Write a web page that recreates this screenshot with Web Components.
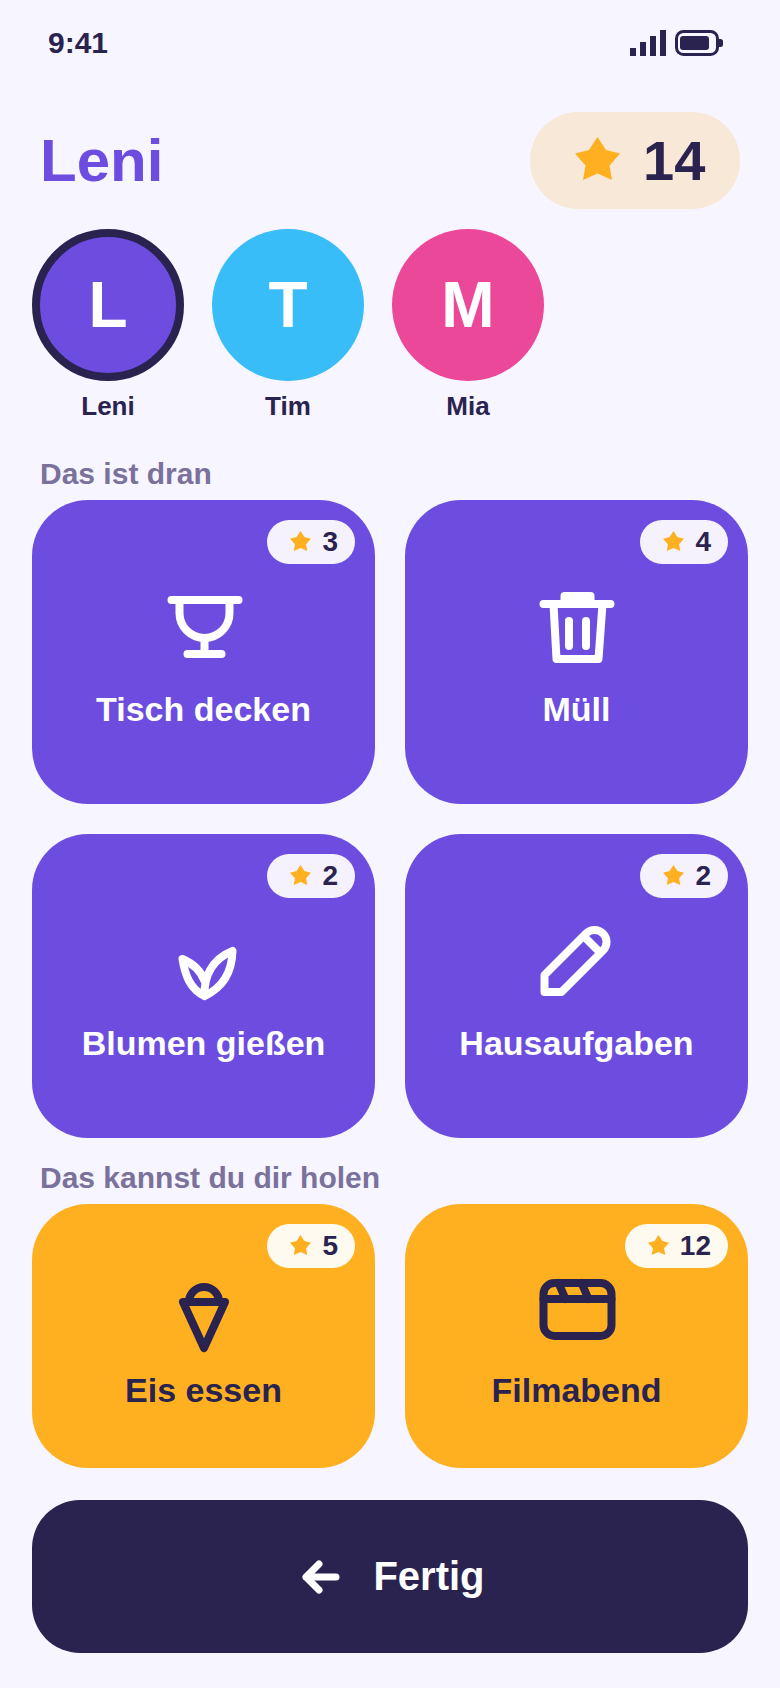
<!DOCTYPE html>
<html lang="de">
<head>
<meta charset="utf-8">
<title>Leni</title>
<style>
  html, body { margin: 0; padding: 0; }
  body {
    width: 780px;
    height: 1688px;
    overflow: hidden;
    background: #f7f5ff;
    color: #2a2350;
    font-family: "Liberation Sans", Arial, sans-serif;
  }
</style>
</head>
<body>
<app-screen>
  <status-bar slot="status" time="9:41"></status-bar>
  <span slot="name">Leni</span>
  <score-badge slot="score">14</score-badge>
  <kid-avatar slot="kids" selected color="#6c4de0" letter="L">Leni</kid-avatar>
  <kid-avatar slot="kids" color="#38bdf8" letter="T">Tim</kid-avatar>
  <kid-avatar slot="kids" color="#ec4899" letter="M">Mia</kid-avatar>

  <section-title>Das ist dran</section-title>
  <card-grid>
    <task-card icon="cup" stars="3">Tisch decken</task-card>
    <task-card icon="trash" stars="4">Müll</task-card>
    <task-card icon="leaf" stars="2">Blumen gießen</task-card>
    <task-card icon="pencil" stars="2">Hausaufgaben</task-card>
  </card-grid>

  <section-title second>Das kannst du dir holen</section-title>
  <card-grid>
    <task-card reward icon="icecream" stars="5">Eis essen</task-card>
    <task-card reward icon="film" stars="12">Filmabend</task-card>
  </card-grid>

  <done-button>Fertig</done-button>
</app-screen>

<script>
"use strict";

const STAR_POINTS = "22.5,0 31,13 45,16.5 34.5,28.5 37,43 22.5,36.5 8,43 10.5,28.5 0,16.5 14,13";

// All drawn in an 84px box, stroke comes from the svg rule in task-card.
const ICONS = {
  cup: `<path d="M9.5 15H76.5M17.5 15V28a25 25 0 0 0 50 0V15M42.5 53V69M25.5 69H59.5"/>`,
  trash: `<path d="M8.5 19H75.5M18.5 19L21.5 74H63.5L67.5 19M34 36V61M51 36V61"/><rect class="fill" x="25.5" y="7" width="34" height="14" rx="4"/>`,
  leaf: `<path d="M42.5 77C42 60 48 41 70.5 32C70 52 62 68 42.5 77ZM42.5 77C28 70 23 56 20.5 40C32 45 39 52 42.5 62"/>`,
  pencil: `<path d="M9.5 73V56L51 14.5A12 12 0 0 1 68 31.5L26.5 73ZM48.5 17L65.5 34"/>`,
  icecream: `<path d="M21 35H63L42 81ZM27 35A15 15 0 0 1 57 35"/>`,
  film: `<rect x="8.5" y="16" width="68" height="53" rx="11"/><path d="M8.5 32H76.5M23.5 16L30.5 32M46.5 16L53.5 32"/>`,
};

class AppScreen extends HTMLElement {
  constructor() {
    super();
    this.attachShadow({ mode: 'open' });
    this.shadowRoot.innerHTML = `
<style>
:host { display: block; padding: 0 32px; }
header {
  display: flex;
  align-items: center;
  justify-content: space-between;
  padding: 0 8px;
  margin-top: 56px;
}
h1 {
  margin: 0;
  font-size: 60px;
  font-weight: 700;
  color: #6c4de0;
}
.kids { display: flex; gap: 28px; margin-top: 20px; }
</style>
<slot name="status"></slot>
<header>
  <h1><slot name="name"></slot></h1>
  <slot name="score"></slot>
</header>
<div class="kids"><slot name="kids"></slot></div>
<slot></slot>
`;
  }
}

class StatusBar extends HTMLElement {
  constructor() {
    super();
    this.attachShadow({ mode: 'open' });
  }

  connectedCallback() {
    this.shadowRoot.innerHTML = `
<style>
:host {
  display: flex;
  align-items: center;
  justify-content: space-between;
  height: 26px;
  padding: 30px 25px 0 16px;
  font-size: 30px;
  font-weight: 700;
}
.icons { display: flex; gap: 9px; }
svg { display: block; fill: #2a2350; }
</style>
<span>${this.getAttribute("time")}</span>
<div class="icons">
  <svg width="36" height="26" viewBox="0 0 36 26">
    <rect x="0" y="18" width="6" height="8"/>
    <rect x="10" y="12" width="6" height="14"/>
    <rect x="20" y="6" width="6" height="20"/>
    <rect x="30" y="0" width="6" height="26"/>
  </svg>
  <svg width="48" height="26" viewBox="0 0 48 26">
    <rect x="1.5" y="1.5" width="41" height="23" rx="7" fill="none" stroke="#2a2350" stroke-width="3"/>
    <rect x="5" y="6" width="29" height="14" rx="3"/>
    <path d="M44 9h1.5a2.5 2.5 0 0 1 2.5 2.5v3a2.5 2.5 0 0 1-2.5 2.5H44z"/>
  </svg>
</div>
`;
  }
}

class ScoreBadge extends HTMLElement {
  constructor() {
    super();
    this.attachShadow({ mode: 'open' });
    this.shadowRoot.innerHTML = `
<style>
:host {
  display: flex;
  align-items: center;
  gap: 23px;
  box-sizing: border-box;
  width: 210px;
  height: 97px;
  padding-left: 45px;
  border-radius: 48px;
  background: rgba(255, 176, 32, .18);
  font-size: 56px;
  font-weight: 700;
}
svg { display: block; fill: #ffb020; margin-top: -4px; }
</style>
<svg width="45" height="43" viewBox="0 0 45 43"><polygon points="${STAR_POINTS}"/></svg>
<slot></slot>
`;
  }
}

class KidAvatar extends HTMLElement {
  constructor() {
    super();
    this.attachShadow({ mode: 'open' });
  }

  connectedCallback() {
    this.shadowRoot.innerHTML = `
<style>
:host {
  display: flex;
  flex-direction: column;
  align-items: center;
  gap: 10px;
  width: 152px;
  font-size: 26px;
  font-weight: 700;
}
.circle {
  display: flex;
  align-items: center;
  justify-content: center;
  box-sizing: border-box;
  width: 152px;
  height: 152px;
  border-radius: 50%;
  background: ${this.getAttribute("color")};
  color: #fff;
  font-size: 64px;
}
:host([selected]) .circle { border: 8px solid #2a2350; }
</style>
<div class="circle">${this.getAttribute("letter")}</div>
<slot></slot>
`;
  }
}

class SectionTitle extends HTMLElement {
  constructor() {
    super();
    this.attachShadow({ mode: 'open' });
    this.shadowRoot.innerHTML = `
<style>
:host {
  display: block;
  margin-top: 35px;
  margin-bottom: 9px;
  padding: 0 8px;
  font-size: 30px;
  font-weight: 700;
  color: #7a719c;
}
:host([second]) { margin-top: 23px; }
</style>
<slot></slot>
`;
  }
}

class CardGrid extends HTMLElement {
  constructor() {
    super();
    this.attachShadow({ mode: 'open' });
    this.shadowRoot.innerHTML = `
<style>
:host { display: grid; grid-template-columns: 343px 343px; gap: 30px; }
</style>
<slot></slot>
`;
  }
}

class TaskCard extends HTMLElement {
  constructor() {
    super();
    this.attachShadow({ mode: 'open' });
  }

  connectedCallback() {
    this.shadowRoot.innerHTML = `
<style>
:host {
  position: relative;
  box-sizing: border-box;
  display: flex;
  flex-direction: column;
  align-items: center;
  gap: 21px;
  height: 304px;
  padding-top: 85px;
  border-radius: 56px;
  background: #6c4de0;
  color: #fff;
  font-size: 34px;
  font-weight: 700;
}
:host([reward]) { gap: 20px; height: 264px; padding-top: 63px; background: #ffb020; color: #2a2350; }
.icon {
  display: block;
  overflow: visible;
  fill: none;
  stroke: currentColor;
  stroke-width: 8;
  stroke-linecap: round;
  stroke-linejoin: round;
}
.icon .fill { fill: currentColor; stroke: none; }
.pill {
  position: absolute;
  top: 20px;
  right: 20px;
  display: flex;
  align-items: center;
  gap: 11px;
  height: 44px;
  padding: 0 17px 0 23px;
  border-radius: 22px;
  background: rgba(255, 255, 255, .93);
  color: #2a2350;
  font-size: 28px;
}
.pill svg { display: block; fill: #ffb020; margin-top: -3px; }
</style>
<div class="pill">
  <svg width="21" height="20" viewBox="0 0 45 43"><polygon points="${STAR_POINTS}"/></svg>
  <span>${this.getAttribute("stars")}</span>
</div>
<svg class="icon" width="84" height="84" viewBox="0 0 84 84">${ICONS[this.getAttribute("icon")]}</svg>
<slot></slot>
`;
  }
}

class DoneButton extends HTMLElement {
  constructor() {
    super();
    this.attachShadow({ mode: 'open' });
    this.shadowRoot.innerHTML = `
<style>
:host {
  display: flex;
  align-items: center;
  justify-content: center;
  gap: 26px;
  height: 153px;
  margin-top: 32px;
  border-radius: 48px;
  background: #2a2350;
  color: #fff;
  font-size: 40px;
  font-weight: 700;
}
svg {
  display: block;
  fill: none;
  stroke: currentColor;
  stroke-width: 7;
  stroke-linecap: round;
  stroke-linejoin: round;
}
</style>
<svg width="52" height="52" viewBox="0 0 52 52"><path d="M41 26H11M24 13L11 26L24 39"/></svg>
<slot></slot>
`;
  }
}

customElements.define('app-screen', AppScreen);
customElements.define('status-bar', StatusBar);
customElements.define('score-badge', ScoreBadge);
customElements.define('kid-avatar', KidAvatar);
customElements.define('section-title', SectionTitle);
customElements.define('card-grid', CardGrid);
customElements.define('task-card', TaskCard);
customElements.define('done-button', DoneButton);
</script>
</body>
</html>
